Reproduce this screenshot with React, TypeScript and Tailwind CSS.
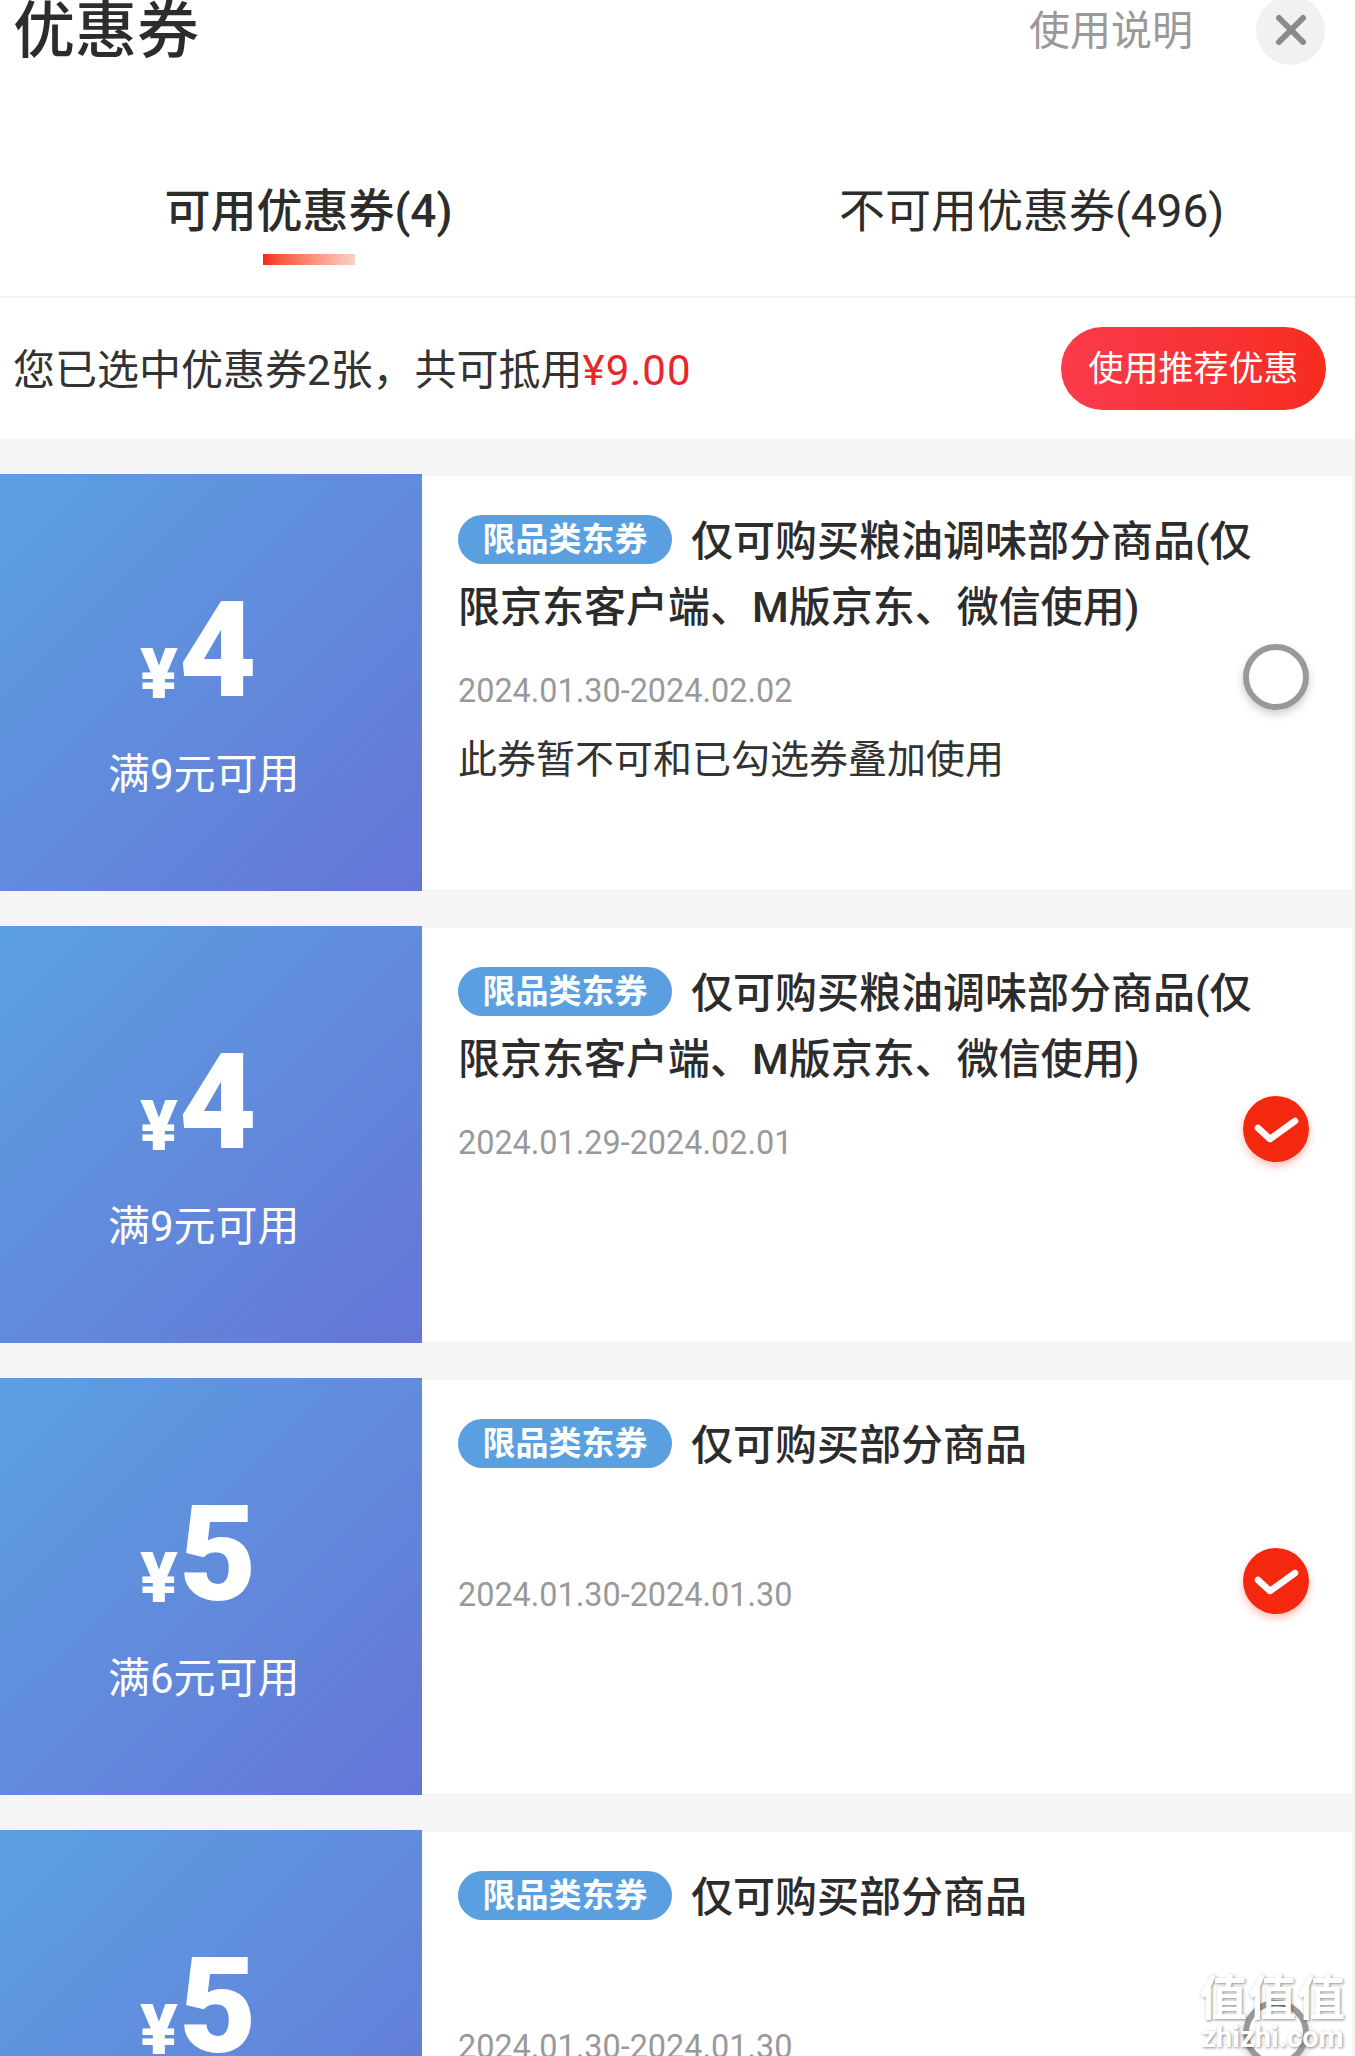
import React from 'react';

interface Coupon {
  amount: number;
  rule: string;
  title: string;
  date: string;
  note?: string;
  checked: boolean;
}

const coupons: Coupon[] = [
  {
    amount: 4,
    rule: '满9元可用',
    title: '仅可购买粮油调味部分商品(仅限京东客户端、M版京东、微信使用)',
    date: '2024.01.30-2024.02.02',
    note: '此券暂不可和已勾选券叠加使用',
    checked: false,
  },
  {
    amount: 4,
    rule: '满9元可用',
    title: '仅可购买粮油调味部分商品(仅限京东客户端、M版京东、微信使用)',
    date: '2024.01.29-2024.02.01',
    checked: true,
  },
  {
    amount: 5,
    rule: '满6元可用',
    title: '仅可购买部分商品',
    date: '2024.01.30-2024.01.30',
    checked: true,
  },
  {
    amount: 5,
    rule: '满6元可用',
    title: '仅可购买部分商品',
    date: '2024.01.30-2024.01.30',
    checked: false,
  },
];

function CouponCard({ coupon }: { coupon: Coupon }) {
  return (
    <div className="flex h-[417px] shrink-0">
      <div className="flex w-[422px] shrink-0 flex-col bg-gradient-to-br from-[#5aa0e2] to-[#6575d6] text-white">
        <div className="mt-[128px] flex h-[97px] items-end pl-[140px]">
          <span className="text-[70px] leading-[50px] font-black">¥</span>
          <span className="ml-[1px] text-[134px] leading-[97px] font-black">{coupon.amount}</span>
        </div>
        <div className="mt-[51px] pl-[108px] text-[42px] leading-[50px]">{coupon.rule}</div>
      </div>
      <div className="relative my-[2px] mr-[3px] flex-1 bg-white pl-[36px]">
        <div className="w-[815px] pt-[33px] text-[42px] leading-[66px] font-medium text-[#2c2c2c]">
          <span className="mr-[19px] inline-flex h-[49px] w-[214px] items-center justify-center rounded-full bg-[#5a9fe0] align-[5px] text-[33px] leading-none font-bold text-white">
            限品类东券
          </span>
          {coupon.title}
        </div>
        <div className="absolute top-[193px] left-[36px] text-[32.4px] leading-[44px] text-[#999999]">{coupon.date}</div>
        <div className="absolute top-[259px] left-[36px] text-[39px] leading-[50px] text-[#333333]">{coupon.note}</div>
        {coupon.checked ? (
          <div className="absolute top-[168px] right-[43px] flex h-[66px] w-[66px] items-center justify-center rounded-full bg-[#f4280f] shadow-[0_4px_8px_rgba(244,40,15,0.3)]">
            <svg width="66" height="66" viewBox="0 0 66 66" fill="none">
              <path d="M15 32 L27 43 L52 25" stroke="white" strokeWidth="6.5" strokeLinecap="round" strokeLinejoin="round" />
            </svg>
          </div>
        ) : (
          <div className="absolute top-[168px] right-[43px] h-[66px] w-[66px] rounded-full border-[6px] border-[#999999] shadow-[0_4px_8px_rgba(0,0,0,0.2)]" />
        )}
      </div>
    </div>
  );
}

export default function App() {
  return (
    <div className="relative h-[2056px] w-[1355px] overflow-hidden bg-white [font-family:Roboto,'Noto_Sans_CJK_SC',sans-serif]">
      <div className="flex h-[60px] items-center pl-[13px]">
        <div className="flex-1 pt-[3px] text-[62px] leading-[60px] font-medium text-[#2c2c2c]">优惠券</div>
        <div className="pt-[3px] text-[41px] text-[#999999]">使用说明</div>
        <button className="mr-[30px] ml-[63px] flex h-[69px] w-[69px] shrink-0 items-center justify-center rounded-full bg-[#f1f1f1]">
          <svg width="34" height="34" viewBox="0 0 34 34" fill="none">
            <path d="M5 5 L29 29 M29 5 L5 29" stroke="#8a8a8a" strokeWidth="6" strokeLinecap="round" />
          </svg>
        </button>
      </div>

      <div className="flex h-[238px] border-b-2 border-[#f2f2f2] pt-[122px] pl-[166px]">
        <div className="flex w-[285px] flex-col items-center">
          <div className="text-[46px] leading-[58px] font-medium whitespace-nowrap text-[#2c2c2c]">可用优惠券(4)</div>
          <div className="mt-[14px] h-[11px] w-[92px] bg-gradient-to-r from-[#f4280f] to-[#f9d0c8]" />
        </div>
        <div className="ml-[388px] text-[46px] leading-[58px] whitespace-nowrap text-[#2c2c2c]">不可用优惠券(496)</div>
      </div>

      <div className="flex h-[141px] items-center justify-between pr-[29px] pl-[13px]">
        <div className="pt-[4px] text-[42px] text-[#333333]">
          您已选中优惠券2张，共可抵用<span className="tracking-[1px] text-[#e8262c]">¥9.00</span>
        </div>
        <button className="flex h-[83px] w-[265px] items-center justify-center rounded-full bg-gradient-to-r from-[#fb3a4b] to-[#f62c1c] pt-[4px] text-[35px] text-white">
          使用推荐优惠
        </button>
      </div>

      <div className="flex h-full flex-col gap-[35px] bg-[#f5f5f5] pt-[35px]">
        {coupons.map((coupon, i) => (
          <CouponCard key={i} coupon={coupon} />
        ))}
      </div>

      {/* watermark */}
      <div className="absolute right-[9px] bottom-[6px] flex flex-col items-center font-bold text-white [text-shadow:1px_1px_3px_rgba(0,0,0,0.45)]">
        <div className="text-[48px] leading-[50px] tracking-[1px]">值值值</div>
        <div className="text-[29px] leading-[26px]">zhizhi.com</div>
      </div>
    </div>
  );
}
